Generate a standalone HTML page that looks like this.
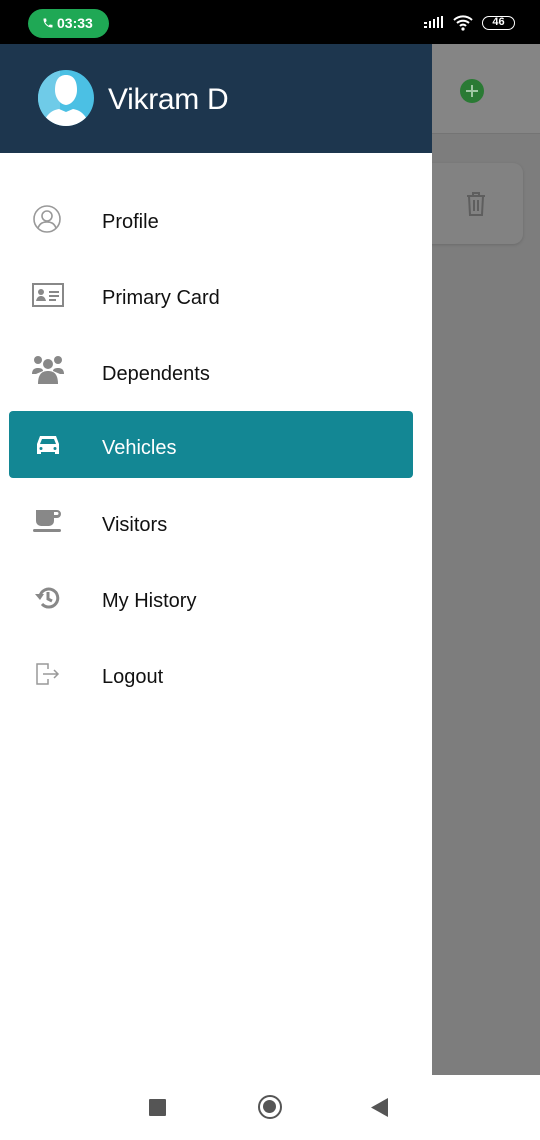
<!DOCTYPE html>
<html><head><style>
*{margin:0;padding:0;box-sizing:border-box}
body{width:540px;height:1140px;position:relative;background:#fff;font-family:"Liberation Sans",Roboto,sans-serif;overflow:hidden}
.sb{position:absolute;left:0;top:0;width:540px;height:44px;background:#000}
.call{position:absolute;left:28px;top:9px;width:81px;height:29px;border-radius:15px;background:#1fa855;color:#fff;font-size:14px;font-weight:bold;line-height:29px;padding-left:29px}
.right{position:absolute;left:432px;top:44px;width:108px;height:1031px;background:#7d7d7d}
.appbar{position:absolute;left:432px;top:44px;width:108px;height:90px;background:#858585;border-bottom:1px solid #747474}
.card{position:absolute;left:420px;top:163px;width:103px;height:81px;background:#828282;border-radius:10px;box-shadow:0 1px 3px rgba(0,0,0,.15)}
.drawer{position:absolute;left:0;top:44px;width:432px;height:1031px;background:#fff}
.head{height:109px;background:#1d364e;position:relative}
.name{position:absolute;left:108px;top:39px;color:#fff;font-size:30px;letter-spacing:-0.3px}
.item{position:absolute;left:9px;width:404px;height:67px;border-radius:4px}
.item span{position:absolute;left:93px;top:24px;font-size:20px;color:#111}
.item svg{position:absolute;left:22px;top:20px}
.sel{background:#138794}
.sel span{color:#fff;top:26px}
.nav{position:absolute;left:0;top:1075px;width:540px;height:65px;background:#fff}
</style></head><body>
<div class="sb">
<div class="call"><svg style="position:absolute;left:14px;top:8px" width="12" height="12" viewBox="0 0 24 24"><path fill="#fff" d="M6.6 10.8c1.4 2.8 3.8 5.1 6.6 6.6l2.2-2.2c.3-.3.7-.4 1-.2 1.1.4 2.300.6 3.6.6.6 0 1 .4 1 1V20c0 .6-.4 1-1 1C10.6 21 3 13.4 3 4c0-.6.4-1 1-1h3.5c.6 0 1 .4 1 1 0 1.3.2 2.5.6 3.6.1.3 0 .7-.2 1z"/></svg>03:33</div>
<svg style="position:absolute;left:424px;top:16px" width="22" height="14"><g fill="#fff"><rect x="0" y="6" width="3" height="2"/><rect x="0" y="10" width="3" height="2"/><rect x="5" y="5" width="2" height="7"/><rect x="9" y="3" width="2" height="9"/><rect x="13" y="1" width="2" height="11"/><rect x="17" y="0" width="2" height="12"/></g></svg>
<svg style="position:absolute;left:452px;top:13px" width="22" height="18" viewBox="0 0 22 18"><g fill="none" stroke="#fff" stroke-width="2"><path d="M2 7a13 13 0 0 1 18 0"/><path d="M5 10a9 9 0 0 1 12 0"/><path d="M8 13a4 4 0 0 1 6 0"/></g><circle cx="11" cy="16" r="1.6" fill="#fff"/></svg>
<div style="position:absolute;left:482px;top:16px;width:33px;height:14px;border:1.5px solid #fff;border-radius:7px;color:#fff;font-size:11px;font-weight:bold;text-align:center;line-height:11px">46</div>
</div>
<div class="right"></div>
<div class="appbar"><svg style="position:absolute;left:27px;top:34px" width="26" height="26"><circle cx="13" cy="13" r="12" fill="#2a7a34"/><path d="M13 7v12M7 13h12" stroke="#9fc7a3" stroke-width="2"/></svg></div>
<div class="card"><svg style="position:absolute;left:45px;top:28px" width="22" height="26" viewBox="0 0 22 26"><g fill="none" stroke="#5e5e5e" stroke-width="2"><path d="M2 5h18M8 5V2h6v3M4 5l1 19h12l1-19M9 9v11M13 9v11"/></g></svg></div>
<div class="drawer">
<div class="head">
<svg style="position:absolute;left:38px;top:26px" width="56" height="56" viewBox="0 0 56 56"><defs><clipPath id="c"><circle cx="28" cy="28" r="28"/></clipPath></defs><circle cx="28" cy="28" r="28" fill="#4bc0e4"/><path d="M0 0h22v56H0z" fill="#6fcbe8" clip-path="url(#c)"/><g clip-path="url(#c)" fill="#fff"><path d="M17 20c0-10 4-15 11-15s11 5 11 15c0 7-4 14-11 15-7-1-11-8-11-15z"/><path d="M5 56c2-11 9-16 16-17l7 3 7-3c7 1 14 6 16 17z"/></g></svg>
<div class="name">Vikram D</div>
</div>
<div class="item" style="top:143px"><svg width="30" height="30" viewBox="0 0 30 30" style="left:23px;top:17px"><g fill="none" stroke="#999" stroke-width="1.6"><circle cx="15" cy="15" r="13"/><circle cx="15" cy="12" r="5"/><path d="M6 24c2-5 5-6 9-6s7 1 9 6"/></g></svg><span>Profile</span></div>
<div class="item" style="top:219px"><svg width="32" height="24" viewBox="0 0 32 24" style="left:23px;top:20px"><rect x="1" y="1" width="30" height="22" fill="none" stroke="#888" stroke-width="2"/><circle cx="9" cy="9" r="3" fill="#888"/><path d="M4 18c1-4 3-5 5-5s4 1 5 5z" fill="#888"/><path d="M17 9h10M17 13h10M17 17h7" stroke="#888" stroke-width="2"/></svg><span>Primary Card</span></div>
<div class="item" style="top:295px"><svg width="32" height="30" viewBox="0 0 32 30" style="left:23px;top:16px"><g fill="#888"><circle cx="6" cy="5" r="4"/><circle cx="26" cy="5" r="4"/><circle cx="16" cy="9" r="5"/><path d="M0 19c0-5 3-6 6-6s5 1 5 3L4 19z"/><path d="M32 19c0-5-3-6-6-6s-5 1-5 3l7 3z"/><path d="M6 29c0-11 5-13 10-13s10 2 10 13z"/></g></svg><span>Dependents</span></div>
<div class="item sel" style="top:367px"><svg width="24" height="20" viewBox="0 0 24 20" style="left:27px;top:24px"><path fill="#fff" d="M4 1h16l3 8v10h-4v-2H5v2H1V9zM6 4 4 9h16l-2-5zM5 12a1.5 1.5 0 1 0 0 3 1.5 1.5 0 0 0 0-3zm14 0a1.5 1.5 0 1 0 0 3 1.5 1.5 0 0 0 0-3z" fill-rule="evenodd"/></svg><span>Vehicles</span></div>
<div class="item" style="top:446px"><svg width="30" height="26" viewBox="0 0 30 26" style="left:23px;top:19px"><g fill="#888"><path d="M4 1h18v11a5 5 0 0 1-5 5H9a5 5 0 0 1-5-5z"/><path d="M22 1h3a4 4 0 0 1 0 8h-3V6h3a1 1 0 0 0 0-3h-3z"/><rect x="1" y="20" width="28" height="3" rx="1.5"/></g></svg><span>Visitors</span></div>
<div class="item" style="top:522px"><svg width="26" height="24" viewBox="0 0 26 24" style="left:26px;top:20px"><g fill="none" stroke="#888" stroke-width="3"><path d="M5 10a9 9 0 1 1 2 8"/><path d="M13 6v7l4 2"/></g><path d="M0 8h9L5 14z" fill="#888"/></svg><span>My History</span></div>
<div class="item" style="top:598px"><svg width="24" height="22" viewBox="0 0 24 22" style="left:27px;top:21px"><g fill="none" stroke="#999" stroke-width="1.5"><path d="M12 6V1H1v20h11v-5"/><path d="M7 11h15M18 7l4 4-4 4"/></g></svg><span>Logout</span></div>
</div>
<div class="nav">
<div style="position:absolute;left:149px;top:24px;width:17px;height:17px;background:#555;border-radius:1px"></div>
<div style="position:absolute;left:258px;top:20px;width:24px;height:24px;border:2.5px solid #555;border-radius:50%"><div style="position:absolute;left:3px;top:3px;width:13px;height:13px;background:#555;border-radius:50%"></div></div>
<svg style="position:absolute;left:371px;top:23px" width="18" height="19"><path d="M17 0v19L0 9.5z" fill="#555"/></svg>
</div>
</body></html>
